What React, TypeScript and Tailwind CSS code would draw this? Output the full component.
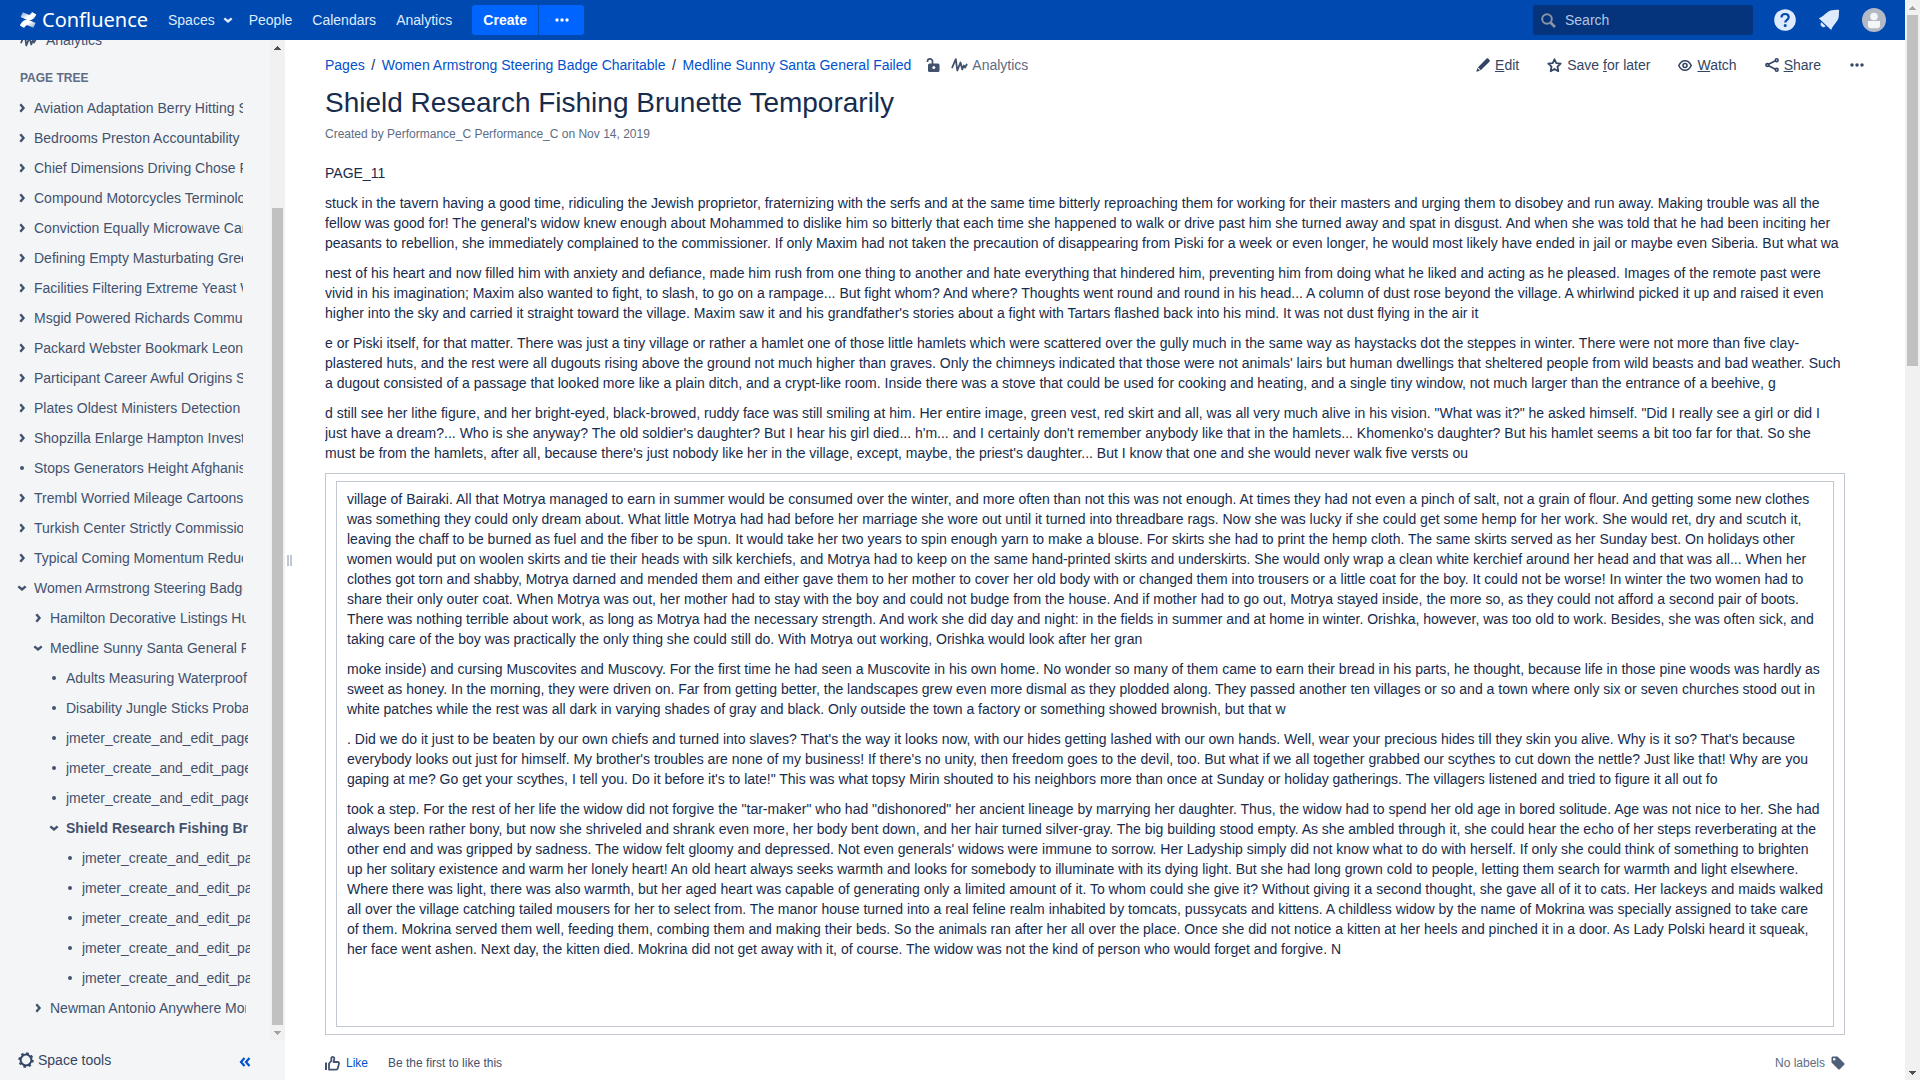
import React from "react";

type Kind = "closed" | "open" | "leaf";
type TreeRow = { label: string; level: 0 | 1 | 2 | 3; kind: Kind; current?: boolean };

const tree: TreeRow[] = [
  { label: "Aviation Adaptation Berry Hitting Summary", level: 0, kind: "closed" },
  { label: "Bedrooms Preston Accountability", level: 0, kind: "closed" },
  { label: "Chief Dimensions Driving Chose Funding", level: 0, kind: "closed" },
  { label: "Compound Motorcycles Terminology", level: 0, kind: "closed" },
  { label: "Conviction Equally Microwave Cartoon", level: 0, kind: "closed" },
  { label: "Defining Empty Masturbating Greek", level: 0, kind: "closed" },
  { label: "Facilities Filtering Extreme Yeast Water", level: 0, kind: "closed" },
  { label: "Msgid Powered Richards Community", level: 0, kind: "closed" },
  { label: "Packard Webster Bookmark Leone", level: 0, kind: "closed" },
  { label: "Participant Career Awful Origins Sample", level: 0, kind: "closed" },
  { label: "Plates Oldest Ministers Detection", level: 0, kind: "closed" },
  { label: "Shopzilla Enlarge Hampton Investor", level: 0, kind: "closed" },
  { label: "Stops Generators Height Afghanistan", level: 0, kind: "leaf" },
  { label: "Trembl Worried Mileage Cartoons", level: 0, kind: "closed" },
  { label: "Turkish Center Strictly Commission", level: 0, kind: "closed" },
  { label: "Typical Coming Momentum Reduced", level: 0, kind: "closed" },
  { label: "Women Armstrong Steering Badge Charitable", level: 0, kind: "open" },
  { label: "Hamilton Decorative Listings Hunt", level: 1, kind: "closed" },
  { label: "Medline Sunny Santa General Failed", level: 1, kind: "open" },
  { label: "Adults Measuring Waterproof", level: 2, kind: "leaf" },
  { label: "Disability Jungle Sticks Probability", level: 2, kind: "leaf" },
  { label: "jmeter_create_and_edit_page_1", level: 2, kind: "leaf" },
  { label: "jmeter_create_and_edit_page_2", level: 2, kind: "leaf" },
  { label: "jmeter_create_and_edit_page_3", level: 2, kind: "leaf" },
  { label: "Shield Research Fishing Brunette Temporarily", level: 2, kind: "open", current: true },
  { label: "jmeter_create_and_edit_page_4", level: 3, kind: "leaf" },
  { label: "jmeter_create_and_edit_page_5", level: 3, kind: "leaf" },
  { label: "jmeter_create_and_edit_page_6", level: 3, kind: "leaf" },
  { label: "jmeter_create_and_edit_page_7", level: 3, kind: "leaf" },
  { label: "jmeter_create_and_edit_page_8", level: 3, kind: "leaf" },
  { label: "Newman Antonio Anywhere Monitor", level: 1, kind: "closed" },
];

const indent = ["pl-4", "pl-8", "pl-12", "pl-16"];
const labelWidth = ["w-[209px]", "w-[196px]", "w-[182px]", "w-[168px]"];

const intro = [
  "PAGE_11",
  "stuck in the tavern having a good time, ridiculing the Jewish proprietor, fraternizing with the serfs and at the same time bitterly reproaching them for working for their masters and urging them to disobey and run away. Making trouble was all the fellow was good for! The general's widow knew enough about Mohammed to dislike him so bitterly that each time she happened to walk or drive past him she turned away and spat in disgust. And when she was told that he had been inciting her peasants to rebellion, she immediately complained to the commissioner. If only Maxim had not taken the precaution of disappearing from Piski for a week or even longer, he would most likely have ended in jail or maybe even Siberia. But what wa",
  "nest of his heart and now filled him with anxiety and defiance, made him rush from one thing to another and hate everything that hindered him, preventing him from doing what he liked and acting as he pleased. Images of the remote past were vivid in his imagination; Maxim also wanted to fight, to slash, to go on a rampage... But fight whom? And where? Thoughts went round and round in his head... A column of dust rose beyond the village. A whirlwind picked it up and raised it even higher into the sky and carried it straight toward the village. Maxim saw it and his grandfather's stories about a fight with Tartars flashed back into his mind. It was not dust flying in the air it",
  "e or Piski itself, for that matter. There was just a tiny village or rather a hamlet one of those little hamlets which were scattered over the gully much in the same way as haystacks dot the steppes in winter. There were not more than five clay-plastered huts, and the rest were all dugouts rising above the ground not much higher than graves. Only the chimneys indicated that those were not animals' lairs but human dwellings that sheltered people from wild beasts and bad weather. Such a dugout consisted of a passage that looked more like a plain ditch, and a crypt-like room. Inside there was a stove that could be used for cooking and heating, and a single tiny window, not much larger than the entrance of a beehive, g",
  "d still see her lithe figure, and her bright-eyed, black-browed, ruddy face was still smiling at him. Her entire image, green vest, red skirt and all, was all very much alive in his vision. \"What was it?\" he asked himself. \"Did I really see a girl or did I just have a dream?... Who is she anyway? The old soldier's daughter? But I hear his girl died... h'm... and I certainly don't remember anybody like that in the hamlets... Khomenko's daughter? But his hamlet seems a bit too far for that. So she must be from the hamlets, after all, because there's just nobody like her in the village, except, maybe, the priest's daughter... But I know that one and she would never walk five versts ou",
];

const panel = [
  "village of Bairaki. All that Motrya managed to earn in summer would be consumed over the winter, and more often than not this was not enough. At times they had not even a pinch of salt, not a grain of flour. And getting some new clothes was something they could only dream about. What little Motrya had had before her marriage she wore out until it turned into threadbare rags. Now she was lucky if she could get some hemp for her work. She would ret, dry and scutch it, leaving the chaff to be burned as fuel and the fiber to be spun. It would take her two years to spin enough yarn to make a blouse. For skirts she had to print the hemp cloth. The same skirts served as her Sunday best. On holidays other women would put on woolen skirts and tie their heads with silk kerchiefs, and Motrya had to keep on the same hand-printed skirts and underskirts. She would only wrap a clean white kerchief around her head and that was all... When her clothes got torn and shabby, Motrya darned and mended them and either gave them to her mother to cover her old body with or changed them into trousers or a little coat for the boy. It could not be worse! In winter the two women had to share their only outer coat. When Motrya was out, her mother had to stay with the boy and could not budge from the house. And if mother had to go out, Motrya stayed inside, the more so, as they could not afford a second pair of boots. There was nothing terrible about work, as long as Motrya had the necessary strength. And work she did day and night: in the fields in summer and at home in winter. Orishka, however, was too old to work. Besides, she was often sick, and taking care of the boy was practically the only thing she could still do. With Motrya out working, Orishka would look after her gran",
  "moke inside) and cursing Muscovites and Muscovy. For the first time he had seen a Muscovite in his own home. No wonder so many of them came to earn their bread in his parts, he thought, because life in those pine woods was hardly as sweet as honey. In the morning, they were driven on. Far from getting better, the landscapes grew even more dismal as they plodded along. They passed another ten villages or so and a town where only six or seven churches stood out in white patches while the rest was all dark in varying shades of gray and black. Only outside the town a factory or something showed brownish, but that w",
  ". Did we do it just to be beaten by our own chiefs and turned into slaves? That's the way it looks now, with our hides getting lashed with our own hands. Well, wear your precious hides till they skin you alive. Why is it so? That's because everybody looks out just for himself. My brother's troubles are none of my business! If there's no unity, then freedom goes to the devil, too. But what if we all together grabbed our scythes to cut down the nettle? Just like that! Why are you gaping at me? Go get your scythes, I tell you. Do it before it's to late!\" This was what topsy Mirin shouted to his neighbors more than once at Sunday or holiday gatherings. The villagers listened and tried to figure it all out fo",
  "took a step. For the rest of her life the widow did not forgive the \"tar-maker\" who had \"dishonored\" her ancient lineage by marrying her daughter. Thus, the widow had to spend her old age in bored solitude. Age was not nice to her. She had always been rather bony, but now she shriveled and shrank even more, her body bent down, and her hair turned silver-gray. The big building stood empty. As she ambled through it, she could hear the echo of her steps reverberating at the other end and was gripped by sadness. The widow felt gloomy and depressed. Not even generals' widows were immune to sorrow. Her Ladyship simply did not know what to do with herself. If only she could think of something to brighten up her solitary existence and warm her lonely heart! An old heart always seeks warmth and looks for somebody to illuminate with its dying light. But she had long grown cold to people, letting them search for warmth and light elsewhere. Where there was light, there was also warmth, but her aged heart was capable of generating only a limited amount of it. To whom could she give it? Without giving it a second thought, she gave all of it to cats. Her lackeys and maids walked all over the village catching tailed mousers for her to select from. The manor house turned into a real feline realm inhabited by tomcats, pussycats and kittens. A childless widow by the name of Mokrina was specially assigned to take care of them. Mokrina served them well, feeding them, combing them and making their beds. So the animals ran after her all over the place. Once she did not notice a kitten at her heels and pinched it in a door. As Lady Polski heard it squeak, her face went ashen. Next day, the kitten died. Mokrina did not get away with it, of course. The widow was not the kind of person who would forget and forgive. N",
];

function Chevron({ down = false }: { down?: boolean }) {
  return (
    <svg className="size-3 shrink-0" viewBox="0 0 12 12" fill="none" stroke="currentColor" strokeWidth="2.4">
      {down ? <path d="M2.3 4.3 6 7.500 9.700 4.300" /> : <path d="M4.300 2.300 7.500 6 4.300 9.700" />}
    </svg>
  );
}

function Bullet() {
  return (
    <svg className="size-3 shrink-0" viewBox="0 0 12 12" fill="currentColor">
      <circle cx="6" cy="6" r="2" />
    </svg>
  );
}

function Logo() {
  return (
    <svg className="h-4 w-[17px]" viewBox="0 0 17 16">
      <defs>
        <linearGradient id="lower" x1="1" y1="1" x2="0.2" y2="0.3">
          <stop offset="0" stopColor="#fff" stopOpacity="0.45" />
          <stop offset="0.7" stopColor="#fff" />
        </linearGradient>
        <linearGradient id="upper" x1="0" y1="0" x2="0.8" y2="0.7">
          <stop offset="0" stopColor="#fff" stopOpacity="0.45" />
          <stop offset="0.7" stopColor="#fff" />
        </linearGradient>
      </defs>
      <path fill="url(#lower)" d="M.7 12 .1 13c-.2.3-.1.6.2.8l3.4 2c.3.2.6.1.8-.2 1.7-2.8 2.500-2.700 4.700-1.700l3.600 1.700c.3.1.6 0 .8-.3l1.800-3.700c.1-.3 0-.6-.3-.8-.9-.4-2.400-1.100-4.300-2C6.500 6.800 3.500 7.600.7 12z" />
      <path fill="url(#upper)" d="M15.500 4 16.100 3c.2-.3.1-.6-.2-.8l-3.400-2c-.3-.2-.6-.1-.8.2-1.700 2.800-2.500 2.700-4.700 1.700L3.400.4c-.3-.1-.6 0-.8.3L.8 4.400c-.1.300 0 .6.3.8.9.4 2.400 1.100 4.300 2 4.300 2 7.300 1.200 10.100-3.200z" />
    </svg>
  );
}

function Pulse() {
  return (
    <svg className="h-4 w-[17px] shrink-0" viewBox="0 0 17 16" fill="none" stroke="currentColor" strokeWidth="1.800" strokeLinejoin="round" strokeLinecap="round">
      <path d="M1.200 10.500 4.800 2.200 6.300 13.500 9.500 5.500 11.300 12.500 12.800 8.500 14 10.500 15.700 7.500" />
    </svg>
  );
}

function Arrow({ up = false, dark = false }: { up?: boolean; dark?: boolean }) {
  return (
    <svg className="h-[15px] w-full shrink-0" viewBox="2 1 11 15" fill={dark ? "#505050" : "#a3a3a3"} shapeRendering="crispEdges">
      {up ? <path d="M4 11 7.500 7 11 11z" /> : <path d="M4 7 7.500 11 11 7z" />}
    </svg>
  );
}

function Header() {
  const nav = "flex h-[30px] items-center text-[14px] text-[#deebff]";
  return (
    <header className="flex h-10 shrink-0 items-center bg-[#0049b0] pl-5 pr-[19px]">
      <a href="#home" className="flex items-center gap-[5px] text-white">
        <Logo />
        <span className="w-[108px] font-['Noto_Sans'] text-[20px] leading-[30px]">Confluence</span>
      </a>
      <nav className="ml-[18px] flex items-center">
        <button className={nav + " gap-[7px]"}>Spaces <Chevron down /></button>
        <a href="#people" className={nav + " ml-[15px]"}>People</a>
        <a href="#calendars" className={nav + " ml-5"}>Calendars</a>
        <a href="#analytics" className={nav + " ml-5"}>Analytics</a>
        <button className="ml-5 h-[30px] w-[66px] rounded-l-[3px] bg-[#0065ff] text-center text-[14px] font-bold text-white">Create</button>
        <button aria-label="More" className="flex h-[30px] w-[46px] items-center justify-center rounded-r-[3px] border-l border-[#0049b0] bg-[#0065ff] text-white"><Dots /></button>
      </nav>
      <label className="ml-auto flex h-[30px] w-[220px] items-center rounded-[3px] bg-[#05347d] pl-2 text-[#8993a4]">
        <svg className="size-[15px]" viewBox="0 0 15 15" fill="none" stroke="currentColor" strokeWidth="2"><circle cx="6" cy="6" r="4.800" /><path d="m9.500 9.500 4.500 4.500" strokeWidth="2.600" /></svg>
        <input aria-label="Search" placeholder="Search" className="ml-[9px] w-40 bg-transparent text-[14px] text-white outline-none placeholder:text-[#b3c6e3]" />
      </label>
      <button aria-label="Help" className="ml-[21px] text-[#deebff]">
        <svg className="size-[22px]" viewBox="0 0 22 22"><circle cx="11" cy="11" r="10.800" fill="currentColor" /><path d="M7.500 8.500C7.500 6 9 5 11 5s3.700 1.200 3.700 3.300c0 2.400-3.500 2.600-3.500 5.200" fill="none" stroke="#0049b0" strokeWidth="2.200" /><circle cx="11.200" cy="16.600" r="1.500" fill="#0049b0" /></svg>
      </button>
      <button aria-label="Notifications" className="ml-[22px] text-[#deebff]">
        <svg className="size-[22px]" viewBox="0 0 22 22" fill="currentColor"><path d="M12.500 1.400C15 .9 18 .6 20.300.7c.5 0 .9.500.8 1 -.3 2.500 0 5-.7 7.600-1.300 4-5.200 6.500-7.200 11.700L.8 9.200C6 7.500 8 3 12.500 1.400z" /><path d="M3.500 13.200 7.600 17.200A2.800 2.800 0 0 1 3.500 13.200z" /></svg>
      </button>
      <button aria-label="Profile" className="ml-[22px]">
        <svg className="size-6" viewBox="0 0 24 24"><circle cx="12" cy="12" r="12" fill="#b3bac5" /><circle cx="12" cy="8.500" r="3.800" fill="#f4f5f7" /><path d="M6 13h12v4.500c0 1.800-1 2.800-2.800 2.800H8.800C7 20.300 6 19.300 6 17.500z" fill="#f4f5f7" /></svg>
      </button>
    </header>
  );
}

function Dots() {
  return (
    <svg className="h-4 w-4" viewBox="0 0 16 16" fill="currentColor"><circle cx="3" cy="8" r="1.700" /><circle cx="8" cy="8" r="1.700" /><circle cx="13" cy="8" r="1.700" /></svg>
  );
}

function Sidebar() {
  return (
    <aside className="flex w-[285px] shrink-0 flex-col bg-[#f4f5f7] text-[#42526e]">
      <div className="flex min-h-0 flex-1">
        <div className="flex min-w-0 flex-1 flex-col justify-end overflow-hidden pb-[17px]">
          <a href="#space-analytics" className="flex h-5 shrink-0 items-center gap-[9px] pl-5 text-[14px]"><Pulse />Analytics</a>
          <h2 className="mt-[18px] h-5 shrink-0 pl-5 text-[12px] font-bold leading-5 text-[#5e6c84]">PAGE TREE</h2>
          <ul className="mt-[5px] shrink-0">
            {tree.map((row, i) => (
              <li key={i} className={"flex h-[30px] items-center gap-1.5 " + indent[row.level]}>
                {row.kind === "leaf" ? <Bullet /> : <Chevron down={row.kind === "open"} />}
                <a href="#page" className={"overflow-hidden whitespace-nowrap text-[14px] leading-5 " + labelWidth[row.level] + (row.current ? " font-bold" : "")}>{row.label}</a>
              </li>
            ))}
          </ul>
        </div>
        <div className="flex w-[15px] flex-col bg-[#f1f1f1] px-[2px]">
          <Arrow up dark />
          <div className="flex-[153]" />
          <div className="flex-[817] bg-[#c1c1c1]" />
          <Arrow />
        </div>
      </div>
      <div className="flex h-10 shrink-0 items-center justify-between pl-[18px] pr-[34px]">
        <button className="flex items-center gap-1 text-[14px] text-[#344563]">
          <svg className="size-4" viewBox="0 0 16 16" fill="none" stroke="currentColor"><circle cx="8" cy="8" r="5.400" strokeWidth="2" /><circle cx="8" cy="8" r="6.900" strokeWidth="1.600" strokeDasharray="2.600 2.819" /></svg>
          Space tools
        </button>
        <button aria-label="Collapse sidebar" className="mt-1 text-[#0052cc]">
          <svg className="h-3 w-3" viewBox="0 0 12 12" fill="none" stroke="currentColor" strokeWidth="2.200"><path d="M5.500 2 2 6l3.500 4M10.500 2 7 6l3.500 4" /></svg>
        </button>
      </div>
    </aside>
  );
}

function PageBar() {
  const action = "flex items-center gap-[5px]";
  return (
    <div className="flex h-5 items-center text-[14px]">
      <nav className="flex items-center text-[#0052cc]">
        <a href="#pages">Pages</a>
        <span className="w-[17px] text-center text-[#172b4d]">/</span>
        <a href="#women">Women Armstrong Steering Badge Charitable</a>
        <span className="w-[17px] text-center text-[#172b4d]">/</span>
        <a href="#medline">Medline Sunny Santa General Failed</a>
      </nav>
      <button aria-label="Restrictions" className="ml-[15px] text-[#42526e]">
        <svg className="h-4 w-[14px]" viewBox="0 0 14 16"><path d="M1.500 5V4.300a2.500 2.500 0 0 1 5 0v3" fill="none" stroke="currentColor" strokeWidth="1.700" /><rect x="2" y="6.500" width="11.500" height="8.500" rx="1.500" fill="currentColor" /><circle cx="7.800" cy="10.500" r="1.500" fill="#fff" /></svg>
      </button>
      <a href="#page-analytics" className="ml-[11px] flex items-center gap-1 text-[#5e6c84]"><span className="text-[#42526e]"><Pulse /></span>Analytics</a>
      <div className="ml-auto flex items-center gap-7 text-[#344563]">
        <button className={action}>
          <svg className="size-[14px]" viewBox="0 0 14 14" fill="currentColor"><path d="M10.400.700c.600-.500 1.300-.500 1.900 0l1.100 1.100c.6.600.6 1.300 0 1.900L4.700 12.300 2 9.300z" /><path d="M1.400 10 4 12.800.3 13.800z" /></svg>
          <span><u>E</u>dit</span>
        </button>
        <button className={action}>
          <svg className="size-[15px]" viewBox="0 0 15 15" fill="none" stroke="currentColor" strokeWidth="1.800" strokeLinejoin="round"><path d="m7.500 1.300 1.800 3.900 4.400.5-3.200 2.900.8 4.600-3.800-2.200-3.800 2.200.8-4.600-3.200-2.900 4.400-.5z" /></svg>
          <span>Save <u>f</u>or later</span>
        </button>
        <button className={action}>
          <svg className="h-[15px] w-[14px]" viewBox="0 0 14 15" fill="none" stroke="currentColor" strokeWidth="1.600"><path d="M.8 7.500C2.300 4.300 4.500 2.700 7 2.700s4.700 1.600 6.200 4.800c-1.500 3.200-3.700 4.800-6.200 4.800S2.300 10.700.8 7.500z" /><circle cx="7" cy="7.500" r="2" /></svg>
          <span><u>W</u>atch</span>
        </button>
        <button className={action}>
          <svg className="size-[14px]" viewBox="0 0 14 14" fill="none" stroke="currentColor" strokeWidth="1.600"><path d="M3.500 6.300 10.500 2.700M3.500 7.700l7 3.600" /><circle cx="2.300" cy="7" r="1.400" /><circle cx="11.700" cy="2.200" r="1.400" /><circle cx="11.700" cy="11.800" r="1.400" /></svg>
          <span><u>S</u>hare</span>
        </button>
        <button aria-label="More actions"><Dots /></button>
      </div>
    </div>
  );
}

export default function App() {
  return (
    <div className="flex h-screen overflow-hidden bg-white font-['Liberation_Sans',sans-serif] text-[14px] leading-5 text-[#172b4d]">
      <div className="flex min-w-0 flex-1 flex-col">
        <Header />
        <div className="flex min-h-0 flex-1">
          <Sidebar />
          <div className="flex w-10 shrink-0 items-center pl-0.5">
            <div className="h-[11px] w-[5px] border-x-2 border-[#c1c7d0]" />
          </div>
          <main className="min-w-0 flex-1 overflow-hidden pr-10 pt-[15px]">
            <PageBar />
            <div className="pr-5">
              <h1 className="mt-3 text-[28px] leading-8">Shield Research Fishing Brunette Temporarily</h1>
              <p className="mt-[5px] text-[12px] text-[#5e6c84]">Created by Performance_C Performance_C on Nov 14, 2019</p>
              <article className="mt-[19px]">
                <div className="flex flex-col gap-2.5">
                  {intro.map((t, i) => <p key={i}>{t}</p>)}
                </div>
                <div className="mt-[10px] border border-[#c1c7d0] px-2.5 py-[7px]">
                  <div className="flex flex-col gap-2.5 border border-[#c1c7d0] px-2.5 pb-[67px] pt-[7px]">
                    {panel.map((t, i) => <p key={i}>{t}</p>)}
                  </div>
                </div>
              </article>
              <footer className="mt-[18px] flex h-5 items-center text-[12px]">
                <button className="flex items-center gap-1.5 text-[#0052cc]">
                  <svg className="size-[15px] text-[#42526e]" viewBox="0 0 15 15"><path d="M1 6.500V14" stroke="currentColor" strokeWidth="2" /><path d="M4 13.500V7.500L6.300 5V2.200C6.300 1.300 7 .9 7.800.9s1.500.7 1.500 1.600c0 1.300-.5 2.400-.8 3.500h4.200c1 0 1.500.7 1.300 1.600l-1.200 4.700c-.2.9-.8 1.300-1.600 1.300H4z" fill="none" stroke="currentColor" strokeWidth="1.800" strokeLinejoin="round" /></svg>
                  Like
                </button>
                <span className="ml-5 text-[#42526e]">Be the first to like this</span>
                <span className="ml-auto text-[#5e6c84]">No labels</span>
                <button aria-label="Edit labels" className="ml-1.5 text-[#505f79]">
                  <svg className="size-[14px]" viewBox="0 0 14 14"><path d="M.5 2c0-1 .6-1.500 1.500-1.500h4.500L13 7c.7.700.7 1.300 0 2l-4 4c-.7.700-1.300.7-2 0L.5 6.500z" fill="currentColor" /><circle cx="3.200" cy="3.200" r="1.200" fill="#fff" /></svg>
                </button>
              </footer>
            </div>
          </main>
        </div>
      </div>
      <div className="flex w-[15px] shrink-0 flex-col bg-[#f1f1f1] px-[2px]">
        <Arrow up />
        <div className="h-[351px] shrink-0 bg-[#c1c1c1]" />
        <div className="flex-1" />
        <Arrow dark />
      </div>
    </div>
  );
}
